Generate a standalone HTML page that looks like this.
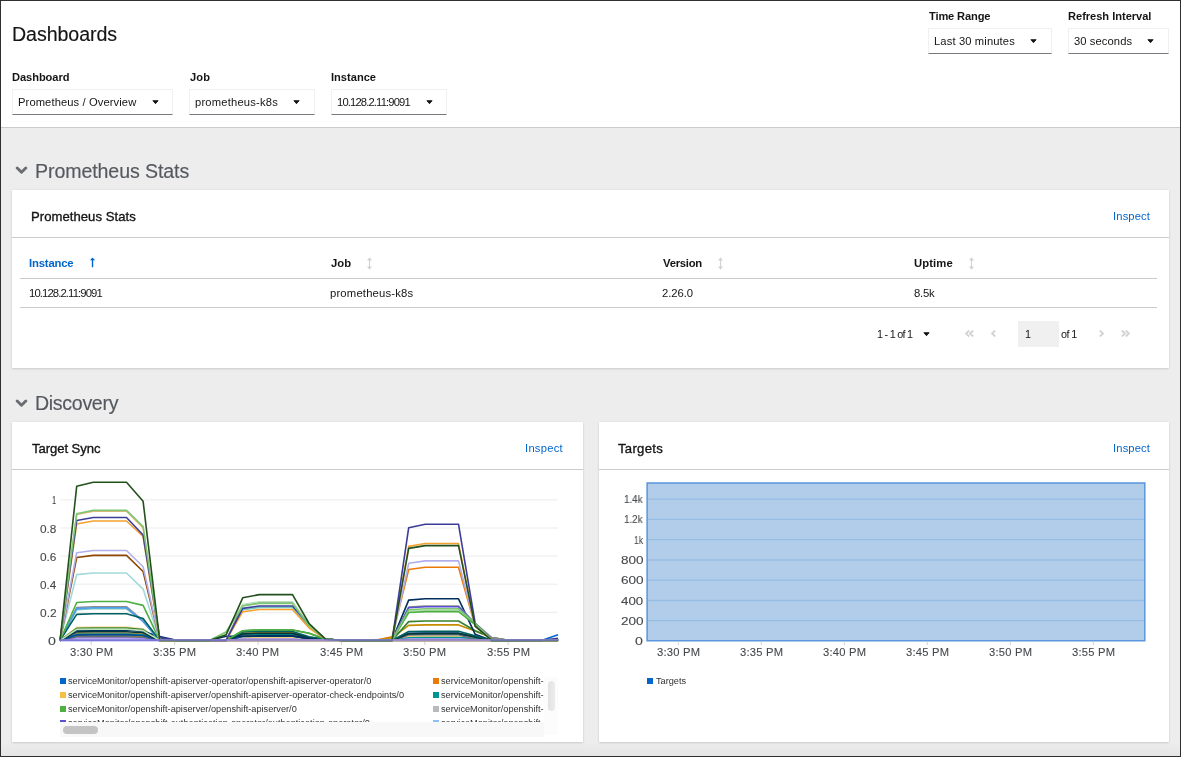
<!DOCTYPE html>
<html><head><meta charset="utf-8"><style>
html,body{margin:0;padding:0;width:1181px;height:757px;overflow:hidden;background:#ededed}
body{position:relative;font-family:"Liberation Sans", sans-serif;color:#151515}
.t{position:absolute;white-space:nowrap;line-height:1;will-change:transform}
.r{position:absolute;display:block}
#frame{position:absolute;left:0;top:0;width:1181px;height:757px;box-sizing:border-box;border:1px solid #303030;pointer-events:none}
</style></head><body>
<div class="r" style="left:0px;top:0px;width:1181px;height:127px;background:#fff"></div><div class="r" style="left:0px;top:127px;width:1181px;height:1px;background:#cbcbcb"></div><div class="r" style="left:0px;top:128px;width:1181px;height:629px;background:#ededed"></div><div class="r" style="left:0px;top:742px;width:1181px;height:15px;background:linear-gradient(#ededed,#e4e4e4)"></div><div class="t" style="left:12.03px;top:25.40px;font-size:19.6px;letter-spacing:-0.066px;-webkit-text-stroke:0.15px #151515;">Dashboards</div><div class="t" style="left:11.78px;top:71.60px;font-size:11.1px;font-weight:700;letter-spacing:-0.062px;">Dashboard</div><div class="t" style="left:190.03px;top:71.60px;font-size:11.1px;font-weight:700;letter-spacing:0.104px;">Job</div><div class="t" style="left:330.68px;top:71.60px;font-size:11.1px;font-weight:700;">Instance</div><div class="t" style="left:928.79px;top:10.90px;font-size:11.1px;font-weight:700;letter-spacing:-0.135px;">Time Range</div><div class="t" style="left:1068.28px;top:10.90px;font-size:11.1px;font-weight:700;letter-spacing:-0.028px;">Refresh Interval</div><div class="r" style="left:12px;top:89px;width:161px;height:26px;background:#fff;border:1px solid #f0f0f0;border-bottom-color:#75787c;box-sizing:border-box"></div><div class="t" style="left:17.60px;top:97.02px;font-size:11.2px;letter-spacing:0.099px;">Prometheus / Overview</div><svg class="r" style="left:151.8px;top:100.0px" width="8" height="5" viewBox="0 0 8 5"><path d="M0.9 0.7 H6.1 L3.5 3.7 Z" fill="#151515" stroke="#151515" stroke-width="0.9" stroke-linejoin="round"/></svg><div class="r" style="left:189px;top:89px;width:126px;height:26px;background:#fff;border:1px solid #f0f0f0;border-bottom-color:#75787c;box-sizing:border-box"></div><div class="t" style="left:195.27px;top:96.92px;font-size:11.2px;letter-spacing:0.201px;">prometheus-k8s</div><svg class="r" style="left:293.3px;top:99.9px" width="8" height="5" viewBox="0 0 8 5"><path d="M0.9 0.7 H6.1 L3.5 3.7 Z" fill="#151515" stroke="#151515" stroke-width="0.9" stroke-linejoin="round"/></svg><div class="r" style="left:331px;top:89px;width:116px;height:26px;background:#fff;border:1px solid #f0f0f0;border-bottom-color:#75787c;box-sizing:border-box"></div><div class="t" style="left:337.06px;top:96.92px;font-size:11.2px;letter-spacing:-0.841px;">10.128.2.11:9091</div><svg class="r" style="left:425.8px;top:99.9px" width="8" height="5" viewBox="0 0 8 5"><path d="M0.9 0.7 H6.1 L3.5 3.7 Z" fill="#151515" stroke="#151515" stroke-width="0.9" stroke-linejoin="round"/></svg><div class="r" style="left:928px;top:28px;width:124px;height:26px;background:#fff;border:1px solid #f0f0f0;border-bottom-color:#75787c;box-sizing:border-box"></div><div class="t" style="left:934.30px;top:36.22px;font-size:11.2px;letter-spacing:0.13px;">Last 30 minutes</div><svg class="r" style="left:1030.0px;top:39.4px" width="8" height="5" viewBox="0 0 8 5"><path d="M0.9 0.7 H6.1 L3.5 3.7 Z" fill="#151515" stroke="#151515" stroke-width="0.9" stroke-linejoin="round"/></svg><div class="r" style="left:1068px;top:28px;width:101px;height:26px;background:#fff;border:1px solid #f0f0f0;border-bottom-color:#75787c;box-sizing:border-box"></div><div class="t" style="left:1074.45px;top:36.32px;font-size:11.2px;letter-spacing:0.095px;">30 seconds</div><svg class="r" style="left:1147.3px;top:39.4px" width="8" height="5" viewBox="0 0 8 5"><path d="M0.9 0.7 H6.1 L3.5 3.7 Z" fill="#151515" stroke="#151515" stroke-width="0.9" stroke-linejoin="round"/></svg><svg class="r" style="left:15px;top:166px" width="13" height="9" viewBox="0 0 13 9"><path d="M2.2 2.0 L6.5 6.3 L10.8 2.0" fill="none" stroke="#6a6e73" stroke-width="2.9" stroke-linecap="round" stroke-linejoin="round"/></svg><div class="t" style="left:35.03px;top:162.00px;font-size:19.6px;color:#55595e;letter-spacing:-0.098px;-webkit-text-stroke:0.15px #55595e;">Prometheus Stats</div><div class="r" style="left:12px;top:190px;width:1157px;height:178px;background:#fff;box-shadow:0 1px 2px 0 rgba(3,3,3,.12),0 0 2px 0 rgba(3,3,3,.06)"></div><div class="t" style="left:30.75px;top:209.71px;font-size:13.1px;letter-spacing:0.044px;-webkit-text-stroke:0.35px #151515;">Prometheus Stats</div><div class="t" style="left:1112.79px;top:210.72px;font-size:11.2px;color:#0066cc;letter-spacing:0.15px;">Inspect</div><div class="r" style="left:12px;top:237px;width:1157px;height:1px;background:#cbcbcb"></div><div class="t" style="left:29.17px;top:258.13px;font-size:11.3px;font-weight:700;color:#0066cc;letter-spacing:-0.17px;">Instance</div><svg class="r" style="left:88px;top:257.4px" width="8" height="12" viewBox="0 0 8 12"><path d="M4.5 0.4 L7.1 3.2 H5.2 V10.3 H3.8 V3.2 H1.9 Z" fill="#0066cc"/></svg><div class="t" style="left:330.83px;top:258.13px;font-size:11.3px;font-weight:700;letter-spacing:0.032px;">Job</div><svg class="r" style="left:366px;top:256.6px" width="7" height="13" viewBox="0 0 7 13"><path d="M3.5 0.3 L6 3.4 H4.05 V9.6 H6 L3.5 12.7 L1 9.6 H2.95 V3.4 H1 Z" fill="#d2d2d2"/></svg><div class="t" style="left:662.64px;top:258.13px;font-size:11.3px;font-weight:700;letter-spacing:-0.26px;">Version</div><svg class="r" style="left:717px;top:256.6px" width="7" height="13" viewBox="0 0 7 13"><path d="M3.5 0.3 L6 3.4 H4.05 V9.6 H6 L3.5 12.7 L1 9.6 H2.95 V3.4 H1 Z" fill="#d2d2d2"/></svg><div class="t" style="left:914.12px;top:258.13px;font-size:11.3px;font-weight:700;letter-spacing:0.093px;">Uptime</div><svg class="r" style="left:968px;top:256.6px" width="7" height="13" viewBox="0 0 7 13"><path d="M3.5 0.3 L6 3.4 H4.05 V9.6 H6 L3.5 12.7 L1 9.6 H2.95 V3.4 H1 Z" fill="#d2d2d2"/></svg><div class="r" style="left:20px;top:278px;width:1137px;height:1px;background:#cbcbcb"></div><div class="t" style="left:29.15px;top:288.23px;font-size:11.3px;letter-spacing:-0.891px;">10.128.2.11:9091</div><div class="t" style="left:330.27px;top:288.03px;font-size:11.3px;letter-spacing:0.162px;">prometheus-k8s</div><div class="t" style="left:662.13px;top:288.03px;font-size:11.3px;letter-spacing:-0.071px;">2.26.0</div><div class="t" style="left:914.29px;top:288.03px;font-size:11.3px;letter-spacing:-0.249px;">8.5k</div><div class="r" style="left:20px;top:307px;width:1137px;height:1px;background:#cbcbcb"></div><div class="t" style="left:877.19px;top:328.76px;font-size:10.8px;letter-spacing:-0.734px;">1 - 1 of 1</div><svg class="r" style="left:923.3px;top:332.2px" width="8" height="5" viewBox="0 0 8 5"><path d="M0.9 0.7 H6.1 L3.5 3.7 Z" fill="#151515" stroke="#151515" stroke-width="0.9" stroke-linejoin="round"/></svg><svg class="r" style="left:965px;top:330px" width="9" height="7" viewBox="0 0 9 7"><path d="M4.2 0.5 L1 3.5 L4.2 6.5 M8.2 0.5 L5 3.5 L8.2 6.5" fill="none" stroke="#d2d2d2" stroke-width="1.8"/></svg><svg class="r" style="left:991px;top:330px" width="5" height="7" viewBox="0 0 5 7"><path d="M4.2 0.5 L1 3.5 L4.2 6.5" fill="none" stroke="#d2d2d2" stroke-width="1.8"/></svg><div class="r" style="left:1018px;top:321px;width:41px;height:26px;background:#f0f0f0"></div><div class="t" style="left:1025.00px;top:328.76px;font-size:10.8px;">1</div><div class="t" style="left:1061.37px;top:328.76px;font-size:10.8px;letter-spacing:-0.621px;">of 1</div><svg class="r" style="left:1099px;top:330px" width="5" height="7" viewBox="0 0 5 7"><path d="M0.8 0.5 L4 3.5 L0.8 6.5" fill="none" stroke="#d2d2d2" stroke-width="1.8"/></svg><svg class="r" style="left:1121px;top:330px" width="9" height="7" viewBox="0 0 9 7"><path d="M0.8 0.5 L4 3.5 L0.8 6.5 M4.8 0.5 L8 3.5 L4.8 6.5" fill="none" stroke="#d2d2d2" stroke-width="1.8"/></svg><svg class="r" style="left:15px;top:398.5px" width="13" height="9" viewBox="0 0 13 9"><path d="M2.2 2.0 L6.5 6.3 L10.8 2.0" fill="none" stroke="#6a6e73" stroke-width="2.9" stroke-linecap="round" stroke-linejoin="round"/></svg><div class="t" style="left:35.43px;top:394.00px;font-size:19.6px;color:#55595e;letter-spacing:-0.322px;-webkit-text-stroke:0.15px #55595e;">Discovery</div><div class="r" style="left:12px;top:422px;width:571px;height:320px;background:#fff;box-shadow:0 1px 2px 0 rgba(3,3,3,.12),0 0 2px 0 rgba(3,3,3,.06)"></div><div class="r" style="left:599px;top:422px;width:570px;height:320px;background:#fff;box-shadow:0 1px 2px 0 rgba(3,3,3,.12),0 0 2px 0 rgba(3,3,3,.06)"></div><div class="t" style="left:31.94px;top:441.71px;font-size:13.1px;letter-spacing:-0.058px;-webkit-text-stroke:0.35px #151515;">Target Sync</div><div class="t" style="left:525.49px;top:442.72px;font-size:11.2px;color:#0066cc;letter-spacing:0.267px;">Inspect</div><div class="r" style="left:12px;top:469px;width:571px;height:1px;background:#cbcbcb"></div><div class="t" style="left:617.84px;top:441.91px;font-size:13.1px;letter-spacing:0.309px;-webkit-text-stroke:0.35px #151515;">Targets</div><div class="t" style="left:1112.79px;top:442.72px;font-size:11.2px;color:#0066cc;letter-spacing:0.15px;">Inspect</div><div class="r" style="left:599px;top:469px;width:570px;height:1px;background:#cbcbcb"></div><svg class="r" style="left:0;top:0;overflow:visible" width="1181" height="757">
<line x1="60" x2="558" y1="640.4" y2="640.4" stroke="#ececec" stroke-width="1"/>
<line x1="60" x2="558" y1="612.3" y2="612.3" stroke="#ececec" stroke-width="1"/>
<line x1="60" x2="558" y1="584.2" y2="584.2" stroke="#ececec" stroke-width="1"/>
<line x1="60" x2="558" y1="556.1" y2="556.1" stroke="#ececec" stroke-width="1"/>
<line x1="60" x2="558" y1="528.0" y2="528.0" stroke="#ececec" stroke-width="1"/>
<line x1="60" x2="558" y1="499.9" y2="499.9" stroke="#ececec" stroke-width="1"/>
<line x1="91.2" x2="91.2" y1="640.5" y2="645" stroke="#d2d2d2" stroke-width="1"/>
<line x1="174.6" x2="174.6" y1="640.5" y2="645" stroke="#d2d2d2" stroke-width="1"/>
<line x1="258.0" x2="258.0" y1="640.5" y2="645" stroke="#d2d2d2" stroke-width="1"/>
<line x1="341.4" x2="341.4" y1="640.5" y2="645" stroke="#d2d2d2" stroke-width="1"/>
<line x1="424.8" x2="424.8" y1="640.5" y2="645" stroke="#d2d2d2" stroke-width="1"/>
<line x1="508.2" x2="508.2" y1="640.5" y2="645" stroke="#d2d2d2" stroke-width="1"/>
<polyline points="60.1,640.4 76.7,635.6 93.3,635.5 109.9,635.5 126.5,635.5 143.1,636.1 159.7,640.4 176.3,640.4 192.9,640.4 209.5,640.4 226.1,640.4 242.7,637.8 259.3,637.6 275.9,637.6 292.5,637.6 309.1,639.3 325.7,639.3 342.3,640.4 358.9,640.4 375.5,640.4 392.1,640.4 408.7,633.6 425.3,633.4 441.9,633.4 458.5,633.4 475.1,639.0 491.7,640.4 508.3,640.4 524.9,640.4 541.5,640.4 558.1,634.8" fill="none" stroke="#06c" stroke-width="1.6" stroke-linejoin="round"/>
<polyline points="60.1,640.4 76.7,633.4 93.3,633.2 109.9,633.2 126.5,633.2 143.1,634.2 159.7,640.4 176.3,640.4 192.9,640.4 209.5,640.4 226.1,640.4 242.7,633.2 259.3,632.7 275.9,632.7 292.5,632.7 309.1,637.3 325.7,639.3 342.3,640.4 358.9,640.4 375.5,640.4 392.1,636.9 408.7,569.5 425.3,567.3 441.9,567.3 458.5,567.3 475.1,625.8 491.7,638.3 508.3,640.4 524.9,640.4 541.5,640.4 558.1,640.4" fill="none" stroke="#ec7a08" stroke-width="1.6" stroke-linejoin="round"/>
<polyline points="60.1,640.4 76.7,627.4 93.3,627.1 109.9,627.1 126.5,627.1 143.1,628.8 159.7,640.4 176.3,640.4 192.9,640.4 209.5,640.4 226.1,640.4 242.7,638.4 259.3,638.3 275.9,638.3 292.5,638.3 309.1,639.6 325.7,639.3 342.3,640.4 358.9,640.4 375.5,640.4 392.1,640.4 408.7,636.3 425.3,636.2 441.9,636.2 458.5,636.2 475.1,639.6 491.7,640.4 508.3,640.4 524.9,640.4 541.5,640.4 558.1,640.4" fill="none" stroke="#f9e0a2" stroke-width="1.6" stroke-linejoin="round"/>
<polyline points="60.1,640.4 76.7,636.3 93.3,636.2 109.9,636.2 126.5,636.2 143.1,636.7 159.7,640.4 176.3,640.4 192.9,640.4 209.5,640.4 226.1,640.4 242.7,634.4 259.3,633.9 275.9,633.9 292.5,633.9 309.1,637.8 325.7,639.3 342.3,640.4 358.9,640.4 375.5,640.4 392.1,637.6 408.7,625.4 425.3,624.9 441.9,624.9 458.5,624.9 475.1,631.1 491.7,637.6 508.3,640.4 524.9,640.4 541.5,640.4 558.1,640.4" fill="none" stroke="#c58c00" stroke-width="1.6" stroke-linejoin="round"/>
<polyline points="60.1,640.4 76.7,637.7 93.3,637.6 109.9,637.6 126.5,637.6 143.1,638.0 159.7,640.4 176.3,640.4 192.9,640.4 209.5,640.4 226.1,640.4 242.7,638.0 259.3,637.9 275.9,637.9 292.5,637.9 309.1,639.4 325.7,639.3 342.3,640.4 358.9,640.4 375.5,640.4 392.1,640.4 408.7,636.3 425.3,636.2 441.9,636.2 458.5,636.2 475.1,637.9 491.7,640.4 508.3,640.4 524.9,640.4 541.5,640.4 558.1,640.4" fill="none" stroke="#f6d173" stroke-width="1.6" stroke-linejoin="round"/>
<polyline points="60.1,640.4 76.7,634.2 93.3,634.1 109.9,634.1 126.5,634.1 143.1,634.9 159.7,640.4 176.3,640.4 192.9,640.4 209.5,640.4 226.1,640.4 242.7,635.2 259.3,634.8 275.9,634.8 292.5,634.8 309.1,638.2 325.7,639.3 342.3,640.4 358.9,640.4 375.5,640.4 392.1,640.4 408.7,637.7 425.3,637.6 441.9,637.6 458.5,637.6 475.1,638.4 491.7,640.4 508.3,640.4 524.9,640.4 541.5,640.4 558.1,640.4" fill="none" stroke="#009596" stroke-width="1.6" stroke-linejoin="round"/>
<polyline points="60.1,640.4 76.7,637.9 93.3,637.9 109.9,637.9 126.5,637.9 143.1,638.2 159.7,640.4 176.3,640.4 192.9,640.4 209.5,640.4 226.1,640.4 242.7,639.1 259.3,639.0 275.9,639.0 292.5,639.0 309.1,639.8 325.7,639.3 342.3,640.4 358.9,640.4 375.5,640.4 392.1,640.4 408.7,639.0 425.3,639.0 441.9,639.0 458.5,639.0 475.1,640.1 491.7,640.4 508.3,640.4 524.9,640.4 541.5,640.4 558.1,640.4" fill="none" stroke="#a18fff" stroke-width="1.6" stroke-linejoin="round"/>
<polyline points="60.1,640.4 76.7,636.8 93.3,636.7 109.9,636.7 126.5,636.7 143.1,637.2 159.7,640.4 176.3,640.4 192.9,640.4 209.5,640.4 226.1,640.4 242.7,636.2 259.3,635.9 275.9,635.9 292.5,635.9 309.1,638.6 325.7,639.3 342.3,640.4 358.9,640.4 375.5,640.4 392.1,640.4 408.7,634.9 425.3,634.8 441.9,634.8 458.5,634.8 475.1,639.3 491.7,640.4 508.3,640.4 524.9,640.4 541.5,640.4 558.1,640.4" fill="none" stroke="#6a6e73" stroke-width="1.6" stroke-linejoin="round"/>
<polyline points="60.1,640.4 76.7,634.9 93.3,634.8 109.9,634.8 126.5,634.8 143.1,635.5 159.7,640.4 176.3,640.4 192.9,640.4 209.5,640.4 226.1,640.4 242.7,636.5 259.3,636.2 275.9,636.2 292.5,636.2 309.1,638.7 325.7,639.3 342.3,640.4 358.9,640.4 375.5,640.4 392.1,640.4 408.7,633.6 425.3,633.4 441.9,633.4 458.5,633.4 475.1,636.9 491.7,640.4 508.3,640.4 524.9,640.4 541.5,640.4 558.1,640.4" fill="none" stroke="#004b95" stroke-width="1.6" stroke-linejoin="round"/>
<polyline points="60.1,640.4 76.7,631.9 93.3,631.7 109.9,631.7 126.5,631.7 143.1,632.8 159.7,640.4 176.3,640.4 192.9,640.4 209.5,640.4 226.1,640.4 242.7,633.9 259.3,633.4 275.9,633.4 292.5,633.4 309.1,637.6 325.7,639.3 342.3,640.4 358.9,640.4 375.5,640.4 392.1,640.4 408.7,633.6 425.3,633.4 441.9,633.4 458.5,633.4 475.1,636.9 491.7,640.4 508.3,640.4 524.9,640.4 541.5,640.4 558.1,640.4" fill="none" stroke="#003737" stroke-width="1.6" stroke-linejoin="round"/>
<polyline points="60.1,640.4 76.7,628.3 93.3,628.0 109.9,628.0 126.5,628.0 143.1,629.6 159.7,640.4 176.3,640.4 192.9,640.4 209.5,640.4 226.1,640.4 242.7,630.7 259.3,630.0 275.9,630.0 292.5,630.0 309.1,633.3 325.7,639.3 342.3,640.4 358.9,640.4 375.5,640.4 392.1,640.4 408.7,621.6 425.3,621.0 441.9,621.0 458.5,621.0 475.1,630.7 491.7,637.6 508.3,640.4 524.9,640.4 541.5,640.4 558.1,640.4" fill="none" stroke="#38812f" stroke-width="1.6" stroke-linejoin="round"/>
<polyline points="60.1,640.4 76.7,630.4 93.3,630.1 109.9,630.1 126.5,630.1 143.1,631.5 159.7,636.6 176.3,640.4 192.9,640.4 209.5,640.4 226.1,636.2 242.7,636.2 259.3,635.9 275.9,635.9 292.5,635.9 309.1,638.6 325.7,639.3 342.3,640.4 358.9,640.4 375.5,640.4 392.1,640.4 408.7,600.1 425.3,598.8 441.9,598.8 458.5,598.8 475.1,634.2 491.7,640.4 508.3,640.4 524.9,640.4 541.5,640.4 558.1,640.4" fill="none" stroke="#002f5d" stroke-width="1.6" stroke-linejoin="round"/>
<polyline points="60.1,640.4 76.7,609.6 93.3,608.8 109.9,608.8 126.5,608.8 143.1,621.4 159.7,640.4 176.3,640.4 192.9,640.4 209.5,640.4 226.1,640.4 242.7,609.7 259.3,607.4 275.9,607.4 292.5,607.4 309.1,627.2 325.7,639.3 342.3,640.4 358.9,640.4 375.5,640.4 392.1,640.4 408.7,640.4 425.3,640.4 441.9,640.4 458.5,640.4 475.1,640.4 491.7,640.4 508.3,640.4 524.9,640.4 541.5,640.4 558.1,640.4" fill="none" stroke="#73c5c5" stroke-width="1.6" stroke-linejoin="round"/>
<polyline points="60.1,640.4 76.7,607.5 93.3,606.7 109.9,606.7 126.5,606.7 143.1,620.8 159.7,640.4 176.3,640.4 192.9,640.4 209.5,640.4 226.1,640.4 242.7,605.1 259.3,602.5 275.9,602.5 292.5,602.5 309.1,625.2 325.7,639.3 342.3,640.4 358.9,640.4 375.5,640.4 392.1,640.4 408.7,607.0 425.3,606.0 441.9,606.0 458.5,606.0 475.1,623.2 491.7,637.6 508.3,640.4 524.9,640.4 541.5,640.4 558.1,640.4" fill="none" stroke="#8a8d90" stroke-width="1.6" stroke-linejoin="round"/>
<polyline points="60.1,640.4 76.7,608.6 93.3,607.8 109.9,607.8 126.5,607.8 143.1,621.5 159.7,640.4 176.3,640.4 192.9,640.4 209.5,640.4 226.1,640.4 242.7,640.4 259.3,640.4 275.9,640.4 292.5,640.4 309.1,640.4 325.7,640.4 342.3,640.4 358.9,640.4 375.5,640.4 392.1,640.4 408.7,640.4 425.3,640.4 441.9,640.4 458.5,640.4 475.1,640.4 491.7,640.4 508.3,640.4 524.9,640.4 541.5,640.4 558.1,640.4" fill="none" stroke="#519de9" stroke-width="1.6" stroke-linejoin="round"/>
<polyline points="60.1,640.4 76.7,614.4 93.3,613.7 109.9,613.7 126.5,613.7 143.1,618.5 159.7,640.4 176.3,640.4 192.9,640.4 209.5,640.4 226.1,640.4 242.7,632.0 259.3,631.4 275.9,631.4 292.5,631.4 309.1,636.8 325.7,639.3 342.3,640.4 358.9,640.4 375.5,640.4 392.1,640.4 408.7,631.5 425.3,631.3 441.9,631.3 458.5,631.3 475.1,635.8 491.7,640.4 508.3,640.4 524.9,640.4 541.5,640.4 558.1,640.4" fill="none" stroke="#005f60" stroke-width="1.6" stroke-linejoin="round"/>
<polyline points="60.1,640.4 76.7,629.4 93.3,629.2 109.9,629.2 126.5,629.2 143.1,630.6 159.7,640.4 176.3,640.4 192.9,640.4 209.5,640.4 226.1,632.0 242.7,604.5 259.3,601.8 275.9,601.8 292.5,601.8 309.1,624.9 325.7,639.3 342.3,640.4 358.9,640.4 375.5,640.4 392.1,640.4 408.7,611.1 425.3,610.2 441.9,610.2 458.5,610.2 475.1,623.8 491.7,640.4 508.3,640.4 524.9,640.4 541.5,640.4 558.1,640.4" fill="none" stroke="#bde2b9" stroke-width="1.6" stroke-linejoin="round"/>
<polyline points="60.1,640.4 76.7,602.5 93.3,601.5 109.9,601.5 126.5,601.5 143.1,605.4 159.7,640.4 176.3,640.4 192.9,640.4 209.5,640.4 226.1,640.4 242.7,630.7 259.3,630.0 275.9,630.0 292.5,630.0 309.1,633.3 325.7,639.3 342.3,640.4 358.9,640.4 375.5,640.4 392.1,640.4 408.7,612.5 425.3,611.6 441.9,611.6 458.5,611.6 475.1,624.6 491.7,640.4 508.3,640.4 524.9,640.4 541.5,640.4 558.1,640.4" fill="none" stroke="#4cb140" stroke-width="1.6" stroke-linejoin="round"/>
<polyline points="60.1,640.4 76.7,640.4 93.3,640.4 109.9,640.4 126.5,640.4 143.1,640.4 159.7,640.4 176.3,640.4 192.9,640.4 209.5,640.4 226.1,640.4 242.7,640.4 259.3,640.4 275.9,640.4 292.5,640.4 309.1,640.4 325.7,640.4 342.3,640.4 358.9,640.4 375.5,640.4 392.1,640.4 408.7,607.7 425.3,606.7 441.9,606.7 458.5,606.7 475.1,623.5 491.7,640.4 508.3,640.4 524.9,640.4 541.5,640.4 558.1,640.4" fill="none" stroke="#5752d1" stroke-width="1.6" stroke-linejoin="round"/>
<polyline points="60.1,640.4 76.7,574.6 93.3,573.0 109.9,573.0 126.5,573.0 143.1,589.1 159.7,640.4 176.3,640.4 192.9,640.4 209.5,640.4 226.1,640.4 242.7,640.4 259.3,640.4 275.9,640.4 292.5,640.4 309.1,640.4 325.7,640.4 342.3,640.4 358.9,640.4 375.5,640.4 392.1,640.4 408.7,640.4 425.3,640.4 441.9,640.4 458.5,640.4 475.1,640.4 491.7,640.4 508.3,640.4 524.9,640.4 541.5,640.4 558.1,640.4" fill="none" stroke="#a2d9d9" stroke-width="1.6" stroke-linejoin="round"/>
<polyline points="60.1,640.4 76.7,557.5 93.3,555.4 109.9,555.4 126.5,555.4 143.1,571.5 159.7,640.4 176.3,640.4 192.9,640.4 209.5,640.4 226.1,640.4 242.7,640.4 259.3,640.4 275.9,640.4 292.5,640.4 309.1,640.4 325.7,640.4 342.3,640.4 358.9,640.4 375.5,640.4 392.1,640.4 408.7,640.4 425.3,640.4 441.9,640.4 458.5,640.4 475.1,640.4 491.7,640.4 508.3,640.4 524.9,640.4 541.5,640.4 558.1,640.4" fill="none" stroke="#8f4700" stroke-width="1.6" stroke-linejoin="round"/>
<polyline points="60.1,640.4 76.7,552.7 93.3,550.5 109.9,550.5 126.5,550.5 143.1,566.7 159.7,640.4 176.3,640.4 192.9,640.4 209.5,640.4 226.1,640.4 242.7,640.4 259.3,640.4 275.9,640.4 292.5,640.4 309.1,640.4 325.7,640.4 342.3,640.4 358.9,640.4 375.5,640.4 392.1,640.4 408.7,563.3 425.3,560.9 441.9,560.9 458.5,560.9 475.1,626.1 491.7,640.4 508.3,640.4 524.9,640.4 541.5,640.4 558.1,640.4" fill="none" stroke="#b2b0ea" stroke-width="1.6" stroke-linejoin="round"/>
<polyline points="60.1,640.4 76.7,524.0 93.3,521.0 109.9,521.0 126.5,521.0 143.1,536.5 159.7,640.4 176.3,640.4 192.9,640.4 209.5,640.4 226.1,640.4 242.7,611.7 259.3,609.5 275.9,609.5 292.5,609.5 309.1,628.0 325.7,639.3 342.3,640.4 358.9,640.4 375.5,640.4 392.1,640.4 408.7,546.4 425.3,543.5 441.9,543.5 458.5,543.5 475.1,625.9 491.7,640.4 508.3,640.4 524.9,640.4 541.5,640.4 558.1,640.4" fill="none" stroke="#f4a12e" stroke-width="1.6" stroke-linejoin="round"/>
<polyline points="60.1,640.4 76.7,514.4 93.3,511.1 109.9,511.1 126.5,511.1 143.1,527.9 159.7,640.4 176.3,640.4 192.9,640.4 209.5,640.4 226.1,640.4 242.7,640.4 259.3,640.4 275.9,640.4 292.5,640.4 309.1,640.4 325.7,640.4 342.3,640.4 358.9,640.4 375.5,640.4 392.1,640.4 408.7,640.4 425.3,640.4 441.9,640.4 458.5,640.4 475.1,640.4 491.7,640.4 508.3,640.4 524.9,640.4 541.5,640.4 558.1,640.4" fill="none" stroke="#f4b678" stroke-width="1.6" stroke-linejoin="round"/>
<polyline points="60.1,640.4 76.7,520.5 93.3,517.5 109.9,517.5 126.5,517.5 143.1,535.0 159.7,637.6 176.3,640.4 192.9,640.4 209.5,640.4 226.1,640.4 242.7,608.4 259.3,606.0 275.9,606.0 292.5,606.0 309.1,624.9 325.7,639.3 342.3,640.4 358.9,640.4 375.5,640.4 392.1,640.4 408.7,527.7 425.3,524.2 441.9,524.2 458.5,524.2 475.1,623.0 491.7,640.4 508.3,640.4 524.9,640.4 541.5,640.4 558.1,638.3" fill="none" stroke="#3c3d99" stroke-width="1.6" stroke-linejoin="round"/>
<polyline points="60.1,640.4 76.7,513.7 93.3,510.4 109.9,510.4 126.5,510.4 143.1,526.6 159.7,640.4 176.3,640.4 192.9,640.4 209.5,640.4 226.1,632.0 242.7,606.0 259.3,603.4 275.9,603.4 292.5,603.4 309.1,625.6 325.7,639.3 342.3,640.4 358.9,640.4 375.5,640.4 392.1,640.4 408.7,609.7 425.3,608.8 441.9,608.8 458.5,608.8 475.1,623.0 491.7,640.4 508.3,640.4 524.9,640.4 541.5,640.4 558.1,640.4" fill="none" stroke="#7cc674" stroke-width="1.6" stroke-linejoin="round"/>
<polyline points="60.1,640.4 76.7,486.3 93.3,482.3 109.9,482.3 126.5,482.3 143.1,501.3 159.7,640.4 176.3,640.4 192.9,640.4 209.5,640.4 226.1,634.8 242.7,597.8 259.3,594.6 275.9,594.6 292.5,594.6 309.1,623.5 325.7,639.3 342.3,640.4 358.9,640.4 375.5,640.4 392.1,640.4 408.7,548.4 425.3,545.6 441.9,545.6 458.5,545.6 475.1,626.2 491.7,640.4 508.3,640.4 524.9,640.4 541.5,640.4 558.1,640.4" fill="none" stroke="#23511e" stroke-width="1.6" stroke-linejoin="round"/>
<polyline points="60.1,640.0 76.7,640.0 93.3,640.0 109.9,640.0 126.5,640.0 143.1,640.0 159.7,640.0 176.3,640.0 192.9,640.0 209.5,640.0 226.1,640.0 242.7,640.0 259.3,640.0 275.9,640.0 292.5,640.0 309.1,640.0 325.7,640.0 342.3,640.0 358.9,640.0 375.5,640.0 392.1,640.0 408.7,640.0 425.3,640.0 441.9,640.0 458.5,640.0 475.1,640.0 491.7,640.0 508.3,640.0 524.9,640.0 541.5,640.0 558.1,640.0" fill="none" stroke="#8481dd" stroke-width="1.6" stroke-linejoin="round"/>
</svg>
<div class="t" style="left:48.23px;top:635.9px;font-size:10.6px;color:#46494c;-webkit-text-stroke:0.1px #46494c;transform:scaleX(1.336);transform-origin:0 0">0</div>
<div class="t" style="left:39.62px;top:607.8px;font-size:10.6px;color:#46494c;-webkit-text-stroke:0.1px #46494c;transform:scaleX(1.125);transform-origin:0 0">0.2</div>
<div class="t" style="left:39.63px;top:579.7px;font-size:10.6px;color:#46494c;-webkit-text-stroke:0.1px #46494c;transform:scaleX(1.108);transform-origin:0 0">0.4</div>
<div class="t" style="left:39.63px;top:551.6px;font-size:10.6px;color:#46494c;-webkit-text-stroke:0.1px #46494c;transform:scaleX(1.116);transform-origin:0 0">0.6</div>
<div class="t" style="left:39.63px;top:523.5px;font-size:10.6px;color:#46494c;-webkit-text-stroke:0.1px #46494c;transform:scaleX(1.116);transform-origin:0 0">0.8</div>
<div class="t" style="left:51.85px;top:495.4px;font-size:10.6px;color:#46494c;-webkit-text-stroke:0.1px #46494c;transform:scaleX(0.694);transform-origin:0 0">1</div>
<div class="t" style="left:69.55px;top:647.1px;font-size:11.2px;color:#46494c;-webkit-text-stroke:0.1px #46494c;letter-spacing:0.247px">3:30 PM</div>
<div class="t" style="left:152.95px;top:647.1px;font-size:11.2px;color:#46494c;-webkit-text-stroke:0.1px #46494c;letter-spacing:0.247px">3:35 PM</div>
<div class="t" style="left:236.35px;top:647.1px;font-size:11.2px;color:#46494c;-webkit-text-stroke:0.1px #46494c;letter-spacing:0.247px">3:40 PM</div>
<div class="t" style="left:319.75px;top:647.1px;font-size:11.2px;color:#46494c;-webkit-text-stroke:0.1px #46494c;letter-spacing:0.247px">3:45 PM</div>
<div class="t" style="left:403.15px;top:647.1px;font-size:11.2px;color:#46494c;-webkit-text-stroke:0.1px #46494c;letter-spacing:0.247px">3:50 PM</div>
<div class="t" style="left:486.55px;top:647.1px;font-size:11.2px;color:#46494c;-webkit-text-stroke:0.1px #46494c;letter-spacing:0.247px">3:55 PM</div>
<div class="r" style="left:60px;top:676px;width:484px;height:46px;overflow:hidden">
<div class="r" style="left:0;top:2.2px;width:6px;height:6px;background:#06c"></div>
<div class="t" style="left:8.3px;top:1.4px;font-size:9.2px;color:#333">serviceMonitor/openshift-apiserver-operator/openshift-apiserver-operator/0</div>
<div class="r" style="left:0;top:16.2px;width:6px;height:6px;background:#f4c145"></div>
<div class="t" style="left:8.3px;top:15.4px;font-size:9.2px;color:#333">serviceMonitor/openshift-apiserver/openshift-apiserver-operator-check-endpoints/0</div>
<div class="r" style="left:0;top:30.2px;width:6px;height:6px;background:#4cb140"></div>
<div class="t" style="left:8.3px;top:29.4px;font-size:9.2px;color:#333">serviceMonitor/openshift-apiserver/openshift-apiserver/0</div>
<div class="r" style="left:0;top:44.2px;width:6px;height:6px;background:#5752d1"></div>
<div class="t" style="left:8.3px;top:43.4px;font-size:9.2px;color:#333">serviceMonitor/openshift-authentication-operator/authentication-operator/0</div>
<div class="r" style="left:373px;top:2.2px;width:6px;height:6px;background:#ec7a08"></div>
<div class="t" style="left:381px;top:1.4px;font-size:9.2px;color:#333">serviceMonitor/openshift-</div>
<div class="r" style="left:373px;top:16.2px;width:6px;height:6px;background:#009596"></div>
<div class="t" style="left:381px;top:15.4px;font-size:9.2px;color:#333">serviceMonitor/openshift-</div>
<div class="r" style="left:373px;top:30.2px;width:6px;height:6px;background:#b8bbbe"></div>
<div class="t" style="left:381px;top:29.4px;font-size:9.2px;color:#333">serviceMonitor/openshift-</div>
<div class="r" style="left:373px;top:44.2px;width:6px;height:6px;background:#8bc1f7"></div>
<div class="t" style="left:381px;top:43.4px;font-size:9.2px;color:#333">serviceMonitor/openshift-</div>
</div>
<div class="r" style="left:544px;top:677px;width:14px;height:58px;background:#fcfcfc"></div>
<div class="r" style="left:548px;top:681px;width:7px;height:30px;border-radius:4px;background:linear-gradient(90deg,#e2e2e2,#ececec)"></div>
<div class="r" style="left:60px;top:722px;width:484px;height:15px;background:#f8f8f8"></div>
<div class="r" style="left:63px;top:726px;width:35px;height:8px;border-radius:4px;background:#c4c4c4"></div><svg class="r" style="left:0;top:0;overflow:visible" width="1181" height="757">
<rect x="647.1" y="482.9" width="497.7" height="157.8" fill="#b1cdea"/>
<line x1="647.1" x2="1144.8" y1="620.7" y2="620.7" stroke="#98bde3" stroke-width="1.3"/>
<line x1="647.1" x2="1144.8" y1="600.5" y2="600.5" stroke="#98bde3" stroke-width="1.3"/>
<line x1="647.1" x2="1144.8" y1="580.2" y2="580.2" stroke="#98bde3" stroke-width="1.3"/>
<line x1="647.1" x2="1144.8" y1="560.0" y2="560.0" stroke="#98bde3" stroke-width="1.3"/>
<line x1="647.1" x2="1144.8" y1="539.7" y2="539.7" stroke="#98bde3" stroke-width="1.3"/>
<line x1="647.1" x2="1144.8" y1="519.4" y2="519.4" stroke="#98bde3" stroke-width="1.3"/>
<line x1="647.1" x2="1144.8" y1="499.2" y2="499.2" stroke="#98bde3" stroke-width="1.3"/>
<path d="M647.1 640.7 V482.9 H1144.8 V640.7 Z" fill="none" stroke="#5a97dc" stroke-width="1.5"/>
<line x1="678.3" x2="678.3" y1="641.5" y2="645" stroke="#d2d2d2" stroke-width="1"/>
<line x1="761.3" x2="761.3" y1="641.5" y2="645" stroke="#d2d2d2" stroke-width="1"/>
<line x1="844.3" x2="844.3" y1="641.5" y2="645" stroke="#d2d2d2" stroke-width="1"/>
<line x1="927.3" x2="927.3" y1="641.5" y2="645" stroke="#d2d2d2" stroke-width="1"/>
<line x1="1010.3" x2="1010.3" y1="641.5" y2="645" stroke="#d2d2d2" stroke-width="1"/>
<line x1="1093.3" x2="1093.3" y1="641.5" y2="645" stroke="#d2d2d2" stroke-width="1"/>
</svg>
<div class="t" style="left:635.33px;top:636.2px;font-size:10.6px;color:#46494c;-webkit-text-stroke:0.1px #46494c;transform:scaleX(1.336);transform-origin:0 0">0</div>
<div class="t" style="left:620.62px;top:615.9px;font-size:10.6px;color:#46494c;-webkit-text-stroke:0.1px #46494c;transform:scaleX(1.278);transform-origin:0 0">200</div>
<div class="t" style="left:621.03px;top:595.6px;font-size:10.6px;color:#46494c;-webkit-text-stroke:0.1px #46494c;transform:scaleX(1.254);transform-origin:0 0">400</div>
<div class="t" style="left:620.62px;top:575.3px;font-size:10.6px;color:#46494c;-webkit-text-stroke:0.1px #46494c;transform:scaleX(1.278);transform-origin:0 0">600</div>
<div class="t" style="left:620.69px;top:555.0px;font-size:10.6px;color:#46494c;-webkit-text-stroke:0.1px #46494c;transform:scaleX(1.274);transform-origin:0 0">800</div>
<div class="t" style="left:633.76px;top:534.7px;font-size:10.6px;color:#46494c;-webkit-text-stroke:0.1px #46494c;transform:scaleX(0.799);transform-origin:0 0">1k</div>
<div class="t" style="left:624.16px;top:514.4px;font-size:10.6px;color:#46494c;-webkit-text-stroke:0.1px #46494c;transform:scaleX(0.925);transform-origin:0 0">1.2k</div>
<div class="t" style="left:624.16px;top:494.1px;font-size:10.6px;color:#46494c;-webkit-text-stroke:0.1px #46494c;transform:scaleX(0.925);transform-origin:0 0">1.4k</div>
<div class="t" style="left:656.75px;top:647.3px;font-size:11.2px;color:#46494c;-webkit-text-stroke:0.1px #46494c;letter-spacing:0.247px">3:30 PM</div>
<div class="t" style="left:739.75px;top:647.3px;font-size:11.2px;color:#46494c;-webkit-text-stroke:0.1px #46494c;letter-spacing:0.247px">3:35 PM</div>
<div class="t" style="left:822.75px;top:647.3px;font-size:11.2px;color:#46494c;-webkit-text-stroke:0.1px #46494c;letter-spacing:0.247px">3:40 PM</div>
<div class="t" style="left:905.75px;top:647.3px;font-size:11.2px;color:#46494c;-webkit-text-stroke:0.1px #46494c;letter-spacing:0.247px">3:45 PM</div>
<div class="t" style="left:988.75px;top:647.3px;font-size:11.2px;color:#46494c;-webkit-text-stroke:0.1px #46494c;letter-spacing:0.247px">3:50 PM</div>
<div class="t" style="left:1071.75px;top:647.3px;font-size:11.2px;color:#46494c;-webkit-text-stroke:0.1px #46494c;letter-spacing:0.247px">3:55 PM</div>
<div class="r" style="left:647px;top:678px;width:6px;height:6px;background:#06c"></div>
<div class="t" style="left:655.5px;top:676.7px;font-size:9.2px;color:#333">Targets</div>
<div id="frame"></div>
</body></html>
